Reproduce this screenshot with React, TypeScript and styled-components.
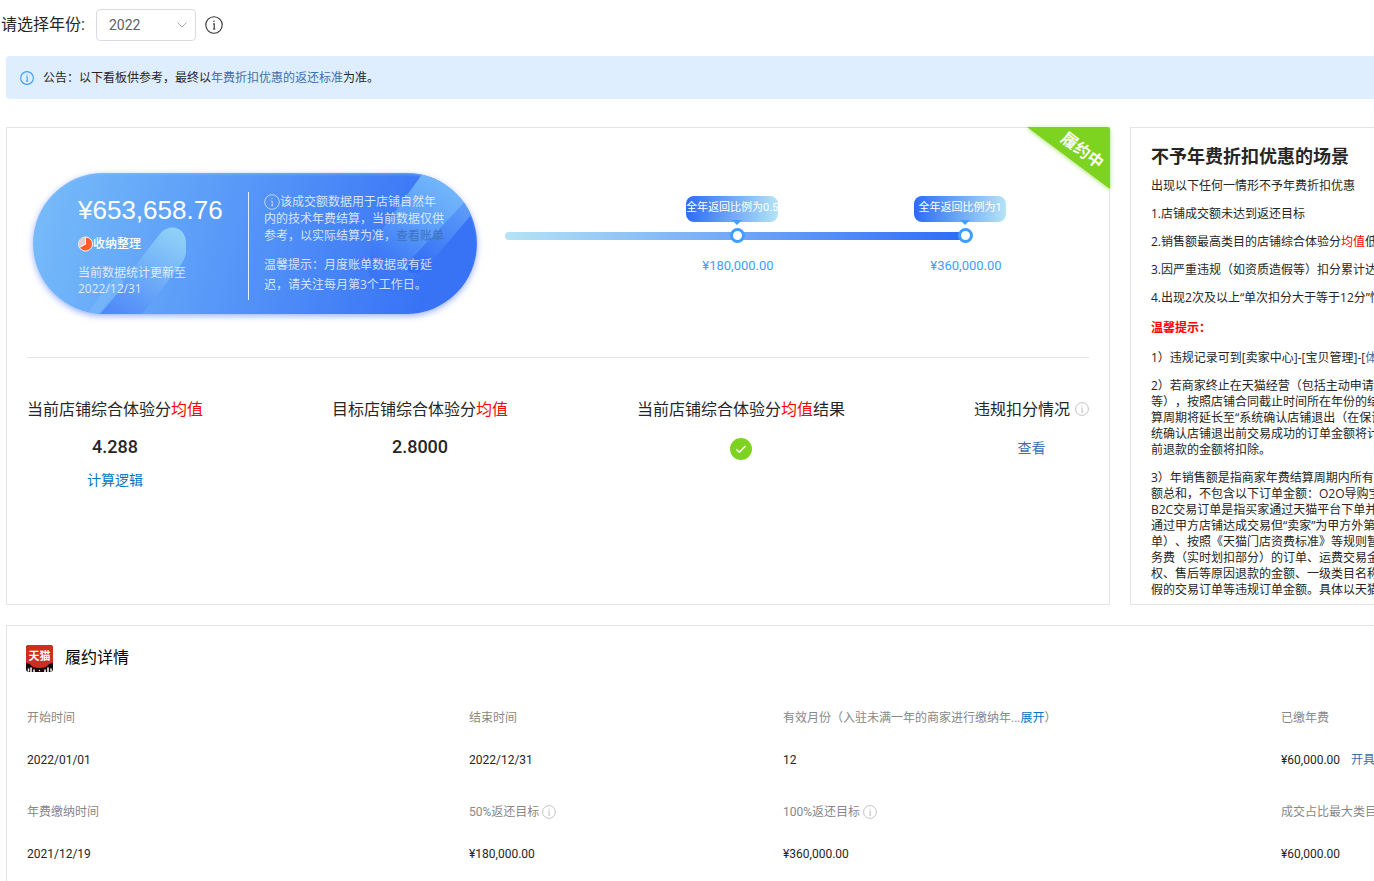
import React from "react";
import styled, { createGlobalStyle, css } from "styled-components";

const Global = createGlobalStyle`
  * { box-sizing: border-box; }
  body {
    margin: 0;
    background: #fff;
    color: #262626;
    font-family: Roboto, "Noto Sans CJK SC", sans-serif;
    font-size: 12px;
    line-height: 16px;
    overflow-x: hidden;
    text-spacing-trim: space-all;
  }
  p, h2, dl, dd, dt { margin: 0; font-weight: 400; }
`;

const Page = styled.main`
  overflow: hidden;
`;

const Toolbar = styled.div`
  display: flex;
  align-items: center;
  height: 56px;
  padding: 0 0 6px 1px;
`;

const YearLabel = styled.label`
  font-size: 16px;
  line-height: 24px;
  margin-right: 11px;
`;

const SelectBox = styled.div`
  display: grid;
  align-items: center;
  width: 100px;
  margin-right: 9px;
  > * { grid-area: 1 / 1; }
  > svg { justify-self: end; margin-right: 8px; pointer-events: none; }
`;

const YearSelect = styled.select`
  appearance: none;
  width: 100%;
  height: 32px;
  padding: 0 12px;
  border: 1px solid #d9dbe4;
  border-radius: 4px;
  background: #fff;
  color: #606266;
  font: 14px Roboto, sans-serif;
`;

const Notice = styled.div`
  display: flex;
  align-items: center;
  gap: 9px;
  height: 43px;
  margin-left: 6px;
  padding-left: 14px;
  border-radius: 4px 0 0 4px;
  background: #deeeff;
  font-family: "Open Sans", "Noto Sans CJK SC", sans-serif;
`;

const Link = styled.a<{ $tone?: string }>`
  color: ${(p) => p.$tone || "#3d6fad"};
  text-decoration: none;
`;

const Columns = styled.div`
  display: grid;
  grid-template-columns: minmax(0, 1fr) 360px;
  gap: 20px;
  margin: 28px -116px 20px 6px;
`;

const Card = styled.section`
  position: relative;
  border: 1px solid #e4e4e6;
  background: #fff;
`;

const MainCard = styled(Card)`
  min-height: 478px;
  padding: 0 20px;
`;

const Ribbon = styled.div`
  position: absolute;
  top: -1px;
  right: -1px;
  width: 84px;
  height: 64px;
  svg { display: block; overflow: visible; }
  path { filter: drop-shadow(0 1px 2px #7ed321aa); }
`;

const RibbonText = styled.span`
  position: absolute;
  top: 12px;
  right: 4px;
  color: #fff;
  font-size: 16px;
  font-weight: 700;
  line-height: 24px;
  transform: rotate(37deg);
`;

const Overview = styled.div`
  display: flex;
  align-items: flex-start;
  height: 230px;
  padding: 45px 0 0 6px;
  border-bottom: 1px solid #e4e4e6;
`;

const Pill = styled.div`
  display: grid;
  flex: none;
  width: 444px;
  height: 141px;
  border-radius: 71px;
  background: linear-gradient(105deg, #78bdf9 0%, #5d9ff8 36%, #3873f6 88%);
  box-shadow: 0 2px 6px #557bff99, inset 0 2px 2px #8bbcff66;
  overflow: hidden;
  color: #fff;
  > * { grid-area: 1 / 1; }
`;

const PillBody = styled.div`
  position: relative;
  display: flex;
  padding: 19px 31px 0 45px;
`;

const Total = styled.div`
  width: 171px;
  height: 108px;
  border-right: 1px solid #e6efff;
`;

const Amount = styled.div`
  font: 26px/36px "Liberation Sans", sans-serif;
  white-space: nowrap;
`;

const Storage = styled.div`
  display: flex;
  align-items: center;
  margin: 7px 0 12px;
  font-weight: 500;
  line-height: 18px;
`;

const Faded = styled.p`
  color: #ffffffc7;
  font-family: "Open Sans", "Noto Sans CJK SC", sans-serif;
`;

const PillNotes = styled.div`
  padding: 1px 0 0 15px;
  white-space: nowrap;
  svg { vertical-align: -4px; }
`;

const NoteLine = styled(Faded)<{ $tall?: boolean }>`
  line-height: ${(p) => (p.$tall ? 20 : 17)}px;
`;

const TipBlock = styled.div`
  margin-top: 11px;
`;

const Progress = styled.div`
  position: relative;
  flex: none;
  width: 460px;
  height: 8px;
  margin: 59px 0 0 28px;
  border-radius: 4px;
  background: linear-gradient(90deg, #b5e4f5, #2d6bf7);
`;

const Step = styled.div`
  position: absolute;
  top: -36px;
  display: flex;
  flex-direction: column;
  align-items: center;
  width: 102px;
  transform: translateX(-50%);
  color: #409eff;
`;

const Bubble = styled.div`
  align-self: flex-start;
  width: 92px;
  height: 26px;
  border-radius: 8px;
  background: linear-gradient(90deg, #2d6bf7, #b5e4f5);
  color: #fff;
  font-size: 11px;
  line-height: 24px;
  text-align: center;
  white-space: nowrap;
`;

const Caret = styled.span`
  height: 5px;
  margin-top: -2px;
  border: 5px solid transparent;
  border-top-color: #409eff;
  border-bottom: 0;
`;

const Knob = styled.span`
  width: 15px;
  height: 15px;
  margin: 3px 0 15px;
  border: 3px solid #409eff;
  border-radius: 50%;
  background: #fff;
`;

const StepValue = styled.span`
  font-size: 13px;
  line-height: 16px;
  padding-left: 2px;
`;

const Metrics = styled.div`
  display: flex;
  justify-content: space-between;
  padding-top: 40px;
`;

const Metric = styled.div`
  display: flex;
  flex-direction: column;
  align-items: center;
  font-size: 14px;
  line-height: 20px;
`;

const MetricTitle = styled.div`
  display: flex;
  align-items: center;
  font-size: 16px;
  line-height: 24px;
  margin-bottom: 15px;
  svg { margin: 0 0 3px 5px; }
`;

const MetricValue = styled.strong`
  font-size: 18px;
  font-weight: 500;
  line-height: 20px;
  margin-bottom: 13px;
`;

const MetricMark = styled.div`
  padding-top: 1px;
  svg { display: block; }
`;

const Red = styled.span`
  color: #f00;
`;

const Aside = styled(Card)`
  padding: 16px 20px 0;
  height: 478px;
  overflow: hidden;
  font-family: "Open Sans", "Noto Sans CJK SC", sans-serif;
  white-space: nowrap;
`;

const AsideTitle = styled.h2`
  font-size: 18px;
  font-weight: 700;
  line-height: 24px;
  margin-bottom: 10px;
`;

const Rule = styled.p<{ $strong?: boolean }>`
  margin-bottom: ${(p) => (p.$strong ? 14 : 12)}px;
  ${(p) => p.$strong && css`margin-top: 14px; color: #f00; font-weight: 700;`}
`;

const Line = styled.span`
  display: block;
`;

const DetailCard = styled(Card)`
  margin: 0 -116px 0 6px;
  padding: 16px 0 12px 18px;
`;

const DetailTitle = styled.h2`
  display: flex;
  align-items: center;
  gap: 11px;
  height: 32px;
  color: #000;
  font-size: 16px;
  line-height: 24px;
`;

const DetailGrid = styled.dl`
  display: grid;
  grid-template-columns: 442fr 314fr 498fr 208fr;
  row-gap: 26px;
  padding: 35px 0 0 2px;
`;

const Label = styled.dt`
  display: flex;
  align-items: center;
  gap: 3px;
  height: 18px;
  color: #888;
  white-space: nowrap;
`;

const Value = styled.dd`
  padding-top: 24px;
  line-height: 18px;
  height: 50px;
  a { margin-left: 11px; }
`;

const InfoIcon = ({ size = 14, color = "#bbb", width = 1 }) => (
  <svg width={size} height={size} viewBox="0 0 16 16" fill="none" stroke={color} strokeWidth={width} aria-hidden="true">
    <circle cx="8" cy="8" r="7.3" />
    <path d="M7.2 7H8.200v4.500M7 11.500h2.200" />
    <circle cx="8" cy="4.6" r=".7" fill={color} stroke="none" />
  </svg>
);

const PillArt = () => (
  <svg width="444" height="141" viewBox="0 0 444 141" aria-hidden="true">
    <defs>
      <linearGradient id="stick" x1="0.8" y1="0" x2="0.2" y2="1">
        <stop offset="0" stopColor="#8fd0f8" />
        <stop offset="1" stopColor="#4f8af8" />
      </linearGradient>
      <linearGradient id="beam" gradientUnits="userSpaceOnUse" x1="425" y1="0" x2="352" y2="112">
        <stop offset="0" stopColor="#7abffb" />
        <stop offset="0.5" stopColor="#599bf9" />
        <stop offset="0.8" stopColor="#3f7cf7" />
        <stop offset="1" stopColor="#3a75f6" />
      </linearGradient>
      <linearGradient id="edge" gradientUnits="userSpaceOnUse" x1="438" y1="30" x2="386" y2="98">
        <stop offset="0" stopColor="#5f9ffa" />
        <stop offset="1" stopColor="#326df5" />
      </linearGradient>
    </defs>
    <path d="M65 141 126 62c10-13 27-8 27 8v8c0 6-3 11-7 16L109 141Z" fill="url(#stick)" />
    <path d="M54 141 76 110c7-9 15-5 15 3L67 141Z" fill="#77b6fa" opacity=".8" />
    <path d="M390 0 348 58c-14 18-18 40-6 54 10 10 24 9 33-2l25-30 44-54V0Z" fill="url(#beam)" />
    <path d="m444 16-64 68c-7 8-7 15-1 16 6 1 12-2 16-7l49-58Z" fill="url(#edge)" />
  </svg>
);

const PieIcon = () => (
  <svg width="15" height="16" viewBox="0 0 16 16" aria-hidden="true">
    <circle cx="8" cy="8" r="7.5" fill="#ff5c26" stroke="#fff" />
    <path d="M8 8V.8A7.2 7.2 0 0 0 1.7 11.6Z" fill="#dfcfc2" />
    <path d="M8 .8V8l-6.3 3.6" fill="none" stroke="#fff" strokeWidth="1.2" />
  </svg>
);

const TmallLogo = () => (
  <svg width="29" height="29" viewBox="0 0 29 29" aria-hidden="true">
    <rect x="1" y="1" width="27" height="27" rx="3" fill="#160a09" />
    <path d="M1 19V4a3 3 0 0 1 3-3h21a3 3 0 0 1 3 3v15l-4 1c-2 3-5 4-9.500 4S7 23 5 20Z" fill="#cf2d22" />
    <path d="M3.500 27v-2M6 28v-4M9 28v-2M20 28v-2M23 28v-4M26 27v-2" stroke="#fff" strokeWidth="1.500" strokeLinecap="round" />
    <circle cx="14.500" cy="26.500" r=".7" fill="#fff" />
    <text x="14.500" y="16" fill="#fff" fontFamily="Noto Sans CJK SC, sans-serif" fontSize="11" fontWeight="700" textAnchor="middle">天猫</text>
  </svg>
);

const CheckIcon = () => (
  <svg width="22" height="22" viewBox="0 0 22 22" aria-label="达标" role="img">
    <circle cx="11" cy="11" r="11" fill="#7ed321" />
    <path d="m6.300 11.300 3 3 6.200-6.300" fill="none" stroke="#fff" strokeWidth="1.500" />
  </svg>
);

const steps = [
  { at: "232px", text: "全年返回比例为0.5", value: "¥180,000.00" },
  { at: "460px", text: "全年返回比例为1", value: "¥360,000.00" },
];

const longRules = [
  [
    "2）若商家终止在天猫经营（包括主动申请退",
    "等），按照店铺合同截止时间所在年份的结算",
    "算周期将延长至“系统确认店铺退出（在保证",
    "统确认店铺退出前交易成功的订单金额将计入",
    "前退款的金额将扣除。",
  ],
  [
    "3）年销售额是指商家年费结算周期内所有交",
    "额总和，不包含以下订单金额：O2O导购宝订",
    "B2C交易订单是指买家通过天猫平台下单并由",
    "通过甲方店铺达成交易但“卖家”为甲方外第三",
    "单）、按照《天猫门店资费标准》等规则暂不",
    "务费（实时划扣部分）的订单、运费交易金额",
    "权、售后等原因退款的金额、一级类目名称为",
    "假的交易订单等违规订单金额。具体以天猫系",
  ],
];

const details = [
  { label: "开始时间", value: "2022/01/01" },
  { label: "结束时间", value: "2022/12/31" },
  { label: "有效月份（入驻未满一年的商家进行缴纳年...", expand: true, value: "12" },
  { label: "已缴年费", value: "¥60,000.00", action: "开具发票" },
  { label: "年费缴纳时间", value: "2021/12/19" },
  { label: "50%返还目标", info: true, value: "¥180,000.00" },
  { label: "100%返还目标", info: true, value: "¥360,000.00" },
  { label: "成交占比最大类目", value: "¥60,000.00" },
];

export default function App() {
  return (
    <Page>
      <Global />
      <Toolbar>
        <YearLabel htmlFor="year">请选择年份:</YearLabel>
        <SelectBox>
          <YearSelect id="year" defaultValue="2022">
            <option>2022</option>
          </YearSelect>
          <svg width="12" height="8" viewBox="0 0 12 8" fill="none" stroke="#a4a8b0" aria-hidden="true">
            <path d="m1.500 1.500 4.500 4.500 4.500-4.500" />
          </svg>
        </SelectBox>
        <InfoIcon size={18} color="#333" />
      </Toolbar>

      <Notice>
        <InfoIcon color="#409eff" width={1.3} />
        <span>
          公告：以下看板供参考，最终以<Link href="#standard">年费折扣优惠的返还标准</Link>为准。
        </span>
      </Notice>

      <Columns>
        <MainCard>
          <Ribbon>
            <svg width="84" height="64" viewBox="0 0 84 64" aria-hidden="true">
              <path d="M1 0h80q3 0 3 3v59Z" fill="#7ed321" />
            </svg>
            <RibbonText>履约中</RibbonText>
          </Ribbon>
          <Overview>
            <Pill>
              <PillArt />
              <PillBody>
                <Total>
                  <Amount>¥653,658.76</Amount>
                  <Storage>
                    <PieIcon />
                    收纳整理
                  </Storage>
                  <Faded>当前数据统计更新至</Faded>
                  <Faded>2022/12/31</Faded>
                </Total>
                <PillNotes>
                  <NoteLine>
                    <InfoIcon size={16} color="#c5d3ee" />
                    该成交额数据用于店铺自然年
                  </NoteLine>
                  <NoteLine>内的技术年费结算，当前数据仅供</NoteLine>
                  <NoteLine>
                    参考，以实际结算为准，<Link href="#bill" $tone="#3f73bd">查看账单</Link>
                  </NoteLine>
                  <TipBlock>
                    <NoteLine $tall>温馨提示：月度账单数据或有延</NoteLine>
                    <NoteLine $tall>迟，请关注每月第3个工作日。</NoteLine>
                  </TipBlock>
                </PillNotes>
              </PillBody>
            </Pill>
            <Progress>
              {steps.map((s) => (
                <Step key={s.at} style={{ left: s.at }}>
                  <Bubble>{s.text}</Bubble>
                  <Caret />
                  <Knob />
                  <StepValue>{s.value}</StepValue>
                </Step>
              ))}
            </Progress>
          </Overview>
          <Metrics>
            <Metric>
              <MetricTitle>当前店铺综合体验分<Red>均值</Red></MetricTitle>
              <MetricValue>4.288</MetricValue>
              <Link href="#logic" $tone="#0076c0">计算逻辑</Link>
            </Metric>
            <Metric>
              <MetricTitle>目标店铺综合体验分<Red>均值</Red></MetricTitle>
              <MetricValue>2.8000</MetricValue>
            </Metric>
            <Metric>
              <MetricTitle>当前店铺综合体验分<Red>均值</Red>结果</MetricTitle>
              <MetricMark><CheckIcon /></MetricMark>
            </Metric>
            <Metric>
              <MetricTitle>违规扣分情况<InfoIcon /></MetricTitle>
              <MetricMark><Link href="#violations">查看</Link></MetricMark>
            </Metric>
          </Metrics>
        </MainCard>

        <Aside>
          <AsideTitle>不予年费折扣优惠的场景</AsideTitle>
          <Rule>出现以下任何一情形不予年费折扣优惠</Rule>
          <Rule>1.店铺成交额未达到返还目标</Rule>
          <Rule>2.销售额最高类目的店铺综合体验分<Red>均值</Red>低于</Rule>
          <Rule>3.因严重违规（如资质造假等）扣分累计达到</Rule>
          <Rule>4.出现2次及以上“单次扣分大于等于12分”情形</Rule>
          <Rule $strong>温馨提示：</Rule>
          <Rule>1）违规记录可到[卖家中心]-[宝贝管理]-[<Link href="#health">体检中心</Link>]</Rule>
          {longRules.map((lines) => (
            <Rule key={lines[0]}>
              {lines.map((line) => <Line key={line}>{line}</Line>)}
            </Rule>
          ))}
        </Aside>
      </Columns>

      <DetailCard>
        <DetailTitle><TmallLogo />履约详情</DetailTitle>
        <DetailGrid>
          {details.map((d) => (
            <div key={d.label}>
              <Label>
                <span>
                  {d.label}
                  {d.expand && <><Link href="#expand" $tone="#0076c0">展开</Link>）</>}
                </span>
                {d.info && <InfoIcon />}
              </Label>
              <Value>
                {d.value}
                {d.action && <Link href="#invoice">{d.action}</Link>}
              </Value>
            </div>
          ))}
        </DetailGrid>
      </DetailCard>
    </Page>
  );
}
